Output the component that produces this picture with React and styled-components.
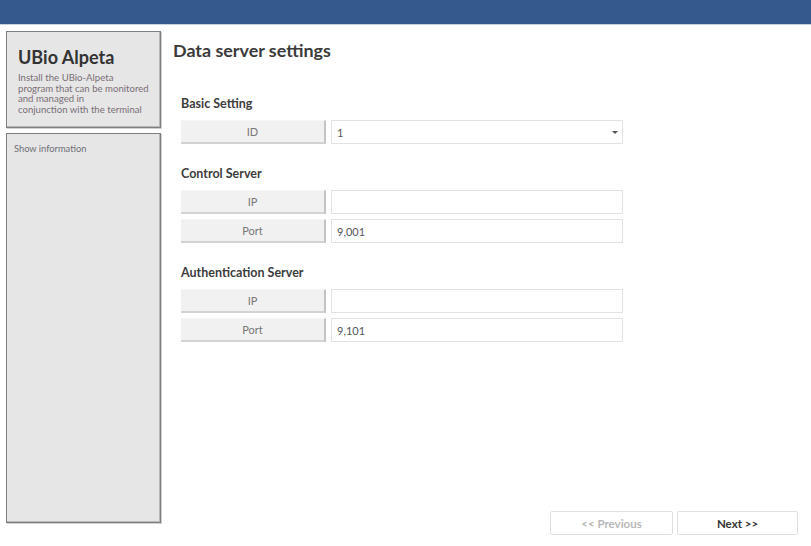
import React from "react";
import styled, { createGlobalStyle } from "styled-components";

const GlobalStyle = createGlobalStyle`
  html, body {
    margin: 0;
    padding: 0;
    background: #ffffff;
    font-family: Lato, "Open Sans", sans-serif;
  }
`;

const sections = [
  { title: "Control Server", rows: [{ label: "IP", value: "" }, { label: "Port", value: "9,001" }] },
  { title: "Authentication Server", rows: [{ label: "IP", value: "" }, { label: "Port", value: "9,101" }] },
];

function App() {
  return (
    <Page>
      <GlobalStyle />
      <TopBar />
      <Body>
        <Sidebar>
          <InfoPanel>
            <ProductName>UBio Alpeta</ProductName>
            <Description>
              Install the UBio-Alpeta
              <br />
              program that can be monitored
              <br />
              and managed in
              <br />
              conjunction with the terminal
            </Description>
          </InfoPanel>
          <DetailPanel>
            <DetailText>Show information</DetailText>
          </DetailPanel>
        </Sidebar>
        <Main>
          <PageTitle>Data server settings</PageTitle>
          <Section $top={34}>
            <SectionTitle>Basic Setting</SectionTitle>
            <Rows>
              <Row>
                <Label>ID</Label>
                <Field>
                  1
                  <Caret />
                </Field>
              </Row>
            </Rows>
          </Section>
          {sections.map((s) => (
            <Section key={s.title} $top={21}>
              <SectionTitle>{s.title}</SectionTitle>
              <Rows>
                {s.rows.map((r) => (
                  <Row key={r.label}>
                    <Label>{r.label}</Label>
                    <Field>{r.value}</Field>
                  </Row>
                ))}
              </Rows>
            </Section>
          ))}
          <Footer>
            <NavButton $disabled $width={123}>&lt;&lt; Previous</NavButton>
            <NavButton $width={121}>Next &gt;&gt;</NavButton>
          </Footer>
        </Main>
      </Body>
    </Page>
  );
}

const Page = styled.div`
  width: 811px;
  height: 546px;
  display: flex;
  flex-direction: column;
  overflow: hidden;
`;

const TopBar = styled.div`
  height: 25px;
  background-color: #34598a;
  border-bottom: 1px solid #c9d3df;
  box-sizing: border-box;
`;

const Body = styled.div`
  flex: 1;
  display: flex;
`;

const Sidebar = styled.aside`
  width: 155px;
  margin: 6px 0 0 6px;
  display: flex;
  flex-direction: column;
  gap: 5px;
  padding-bottom: 23px;
`;

const panel = `
  box-sizing: border-box;
  background-color: #e6e6e6;
  border: 1px solid #7f7f7f;
  box-shadow: inset -1px -1px 0 #b8b8b8, 1px 1px 0 #d0d0d0;
`;

const InfoPanel = styled.div`
  ${panel}
  height: 97px;
  padding: 15px 6px 0 11px;
`;

const DetailPanel = styled.div`
  ${panel}
  flex: 1;
  padding: 9px 7px;
`;

const ProductName = styled.h1`
  margin: 0;
  font-size: 18px;
  line-height: 20px;
  font-weight: 700;
  color: #333333;
`;

const Description = styled.p`
  margin: 6px 0 0;
  font-size: 9.6px;
  line-height: 10.7px;
  color: #7a6f76;
`;

const DetailText = styled.div`
  font-size: 9.3px;
  color: #6f6f78;
`;

const Main = styled.main`
  flex: 1;
  display: flex;
  flex-direction: column;
  padding: 14px 13px 11px 12px;
`;

const PageTitle = styled.h2`
  margin: 0;
  font-size: 17.9px;
  line-height: 22px;
  font-weight: 700;
  color: #3a3a3a;
`;

const Section = styled.section`
  margin-top: ${(p) => p.$top}px;
  padding-left: 8px;
`;

const SectionTitle = styled.h3`
  margin: 0 0 8px;
  font-size: 12.5px;
  line-height: 17px;
  font-weight: 700;
  color: #3d3d3d;
`;

const Rows = styled.div`
  display: flex;
  flex-direction: column;
  gap: 5px;
`;

const Row = styled.div`
  display: flex;
  gap: 5px;
  height: 24px;
`;

const Label = styled.div`
  box-sizing: border-box;
  width: 145px;
  display: flex;
  align-items: center;
  justify-content: center;
  background-color: #f1f1f1;
  border-right: 2px solid #c4c4c4;
  border-bottom: 2px solid #d2d2d2;
  border-top: 1px solid #f6f6f6;
  font-size: 11px;
  color: #777777;
`;

const Field = styled.div`
  box-sizing: border-box;
  width: 292px;
  position: relative;
  display: flex;
  align-items: center;
  padding-left: 5px;
  background: #ffffff;
  border: 1px solid #e2e2e2;
  font-size: 11px;
  color: #555555;
`;

const Caret = styled.span`
  position: absolute;
  right: 4px;
  top: 10px;
  width: 0;
  height: 0;
  border-left: 3px solid transparent;
  border-right: 3px solid transparent;
  border-top: 3px solid #555555;
`;

const Footer = styled.div`
  margin-top: auto;
  display: flex;
  justify-content: flex-end;
  gap: 4px;
`;

const NavButton = styled.button`
  box-sizing: border-box;
  width: ${(p) => p.$width}px;
  height: 24px;
  background: #ffffff;
  border: 1px solid #e0e0e0;
  border-radius: 2px;
  font-family: Lato, "Open Sans", sans-serif;
  font-size: 11.5px;
  font-weight: 700;
  color: ${(p) => (p.$disabled ? "#b8b8b8" : "#333333")};
  padding: 0;
`;

export default App;
